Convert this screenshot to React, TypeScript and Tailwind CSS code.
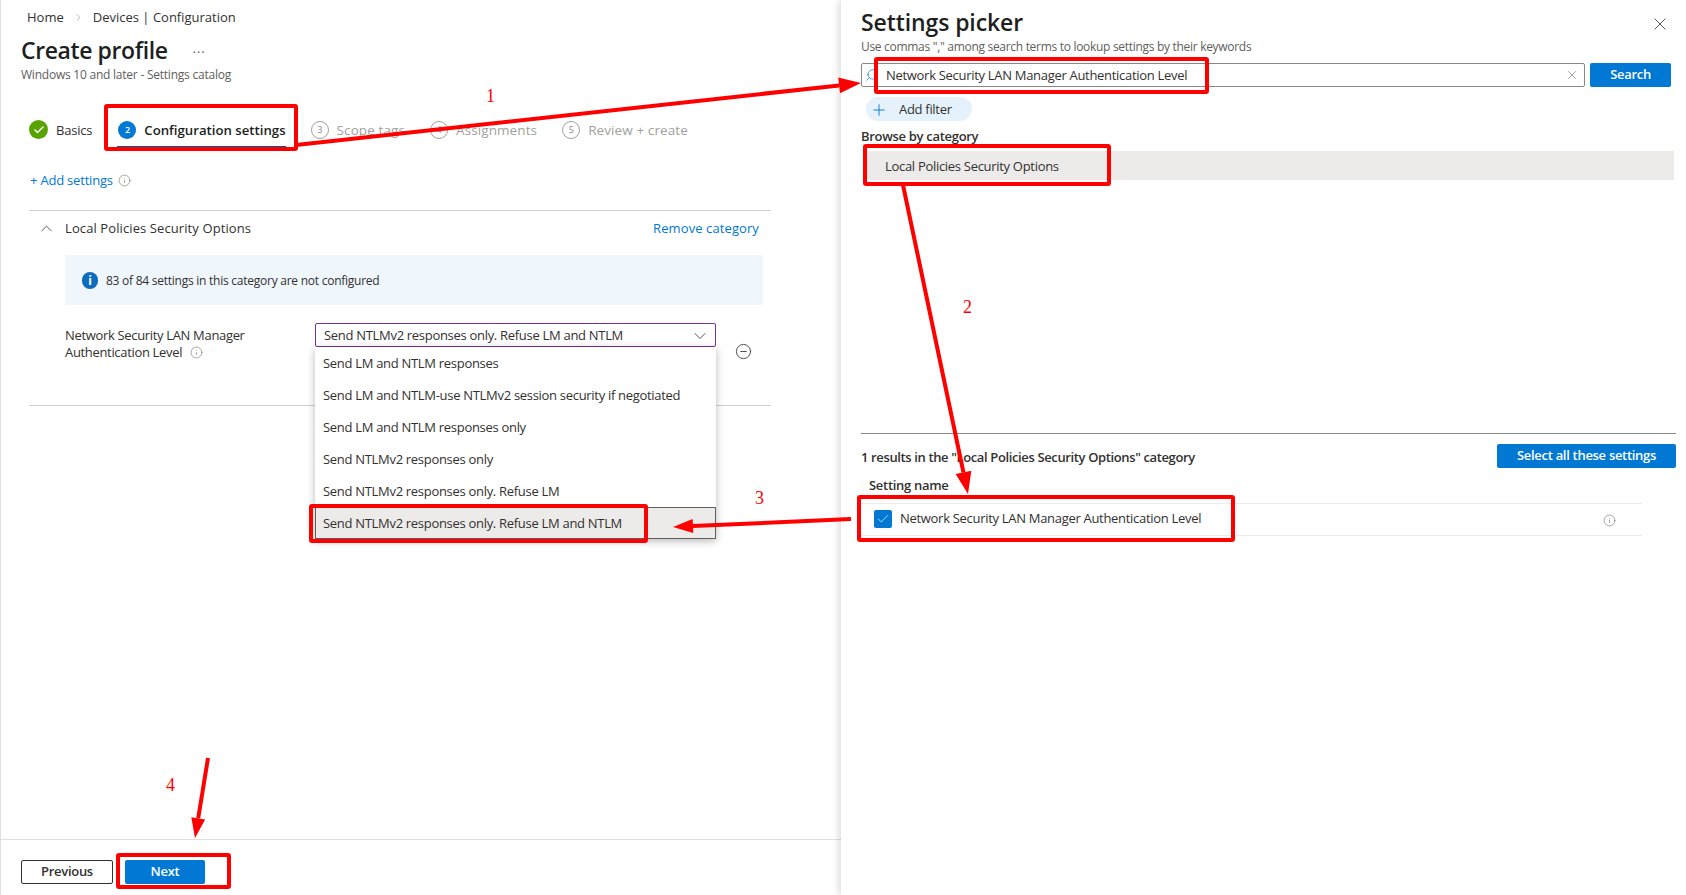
import { Check, ChevronDown, ChevronRight, ChevronUp, CircleMinus, Info, Plus, Search, X } from 'lucide-react';

const options = [
  'Send LM and NTLM responses',
  'Send LM and NTLM-use NTLMv2 session security if negotiated',
  'Send LM and NTLM responses only',
  'Send NTLMv2 responses only',
  'Send NTLMv2 responses only. Refuse LM',
  'Send NTLMv2 responses only. Refuse LM and NTLM',
];

const pendingSteps = [
  { n: 3, label: 'Scope tags' },
  { n: 4, label: 'Assignments' },
  { n: 5, label: 'Review + create' },
];

function Arrow({ x1, y1, x2, y2, head = 20, spread = 8 }: { x1: number; y1: number; x2: number; y2: number; head?: number; spread?: number }) {
  const len = Math.hypot(x2 - x1, y2 - y1);
  const ux = (x2 - x1) / len;
  const uy = (y2 - y1) / len;
  const bx = x2 - ux * head;
  const by = y2 - uy * head;
  const points = `${x2},${y2} ${bx - uy * spread},${by + ux * spread} ${bx + uy * spread},${by - ux * spread}`;
  return (
    <g>
      <line x1={x1} y1={y1} x2={bx} y2={by} stroke="#f00" strokeWidth={4} />
      <polygon points={points} fill="#f00" />
    </g>
  );
}

function Annotations() {
  const boxes = [
    [106, 106, 190, 43],
    [876, 59, 331, 33],
    [865, 146, 244, 38],
    [859, 497, 374, 43],
    [311, 506, 335, 35],
    [118, 855, 111, 32],
  ];
  const numbers = [
    { n: '1', cls: 'left-[486px] top-[84px]' },
    { n: '2', cls: 'left-[963px] top-[295px]' },
    { n: '3', cls: 'left-[755px] top-[486px]' },
    { n: '4', cls: 'left-[166px] top-[773px]' },
  ];
  return (
    <div className="absolute inset-0 z-20 pointer-events-none">
      <svg className="absolute inset-0" width="1686" height="895" fill="none">
        {boxes.map(([x, y, w, h]) => (
          <rect key={`${x}-${y}`} x={x} y={y} width={w} height={h} rx={1} stroke="#f00" strokeWidth={4} />
        ))}
        <Arrow x1={296} y1={145} x2={861} y2={83} head={22} spread={8} />
        <Arrow x1={903} y1={185} x2={968} y2={494} head={22} spread={8} />
        <Arrow x1={851} y1={519} x2={673} y2={527} head={20} spread={7} />
        <Arrow x1={208} y1={758} x2={195} y2={838} head={20} spread={7} />
      </svg>
      {numbers.map((item) => (
        <span key={item.n} className={`absolute text-[18px] leading-[24px] text-[#f00] font-['Liberation_Serif',serif] ${item.cls}`}>
          {item.n}
        </span>
      ))}
    </div>
  );
}

function StepCircle({ n }: { n: number }) {
  return (
    <span className="-mt-[3px] flex h-[18px] w-[18px] items-center justify-center rounded-full border border-[#a19f9d] text-[9px] text-[#8a8886]">
      {n}
    </span>
  );
}

function Tabs() {
  return (
    <div className="mt-[32px] flex h-[34px] items-center gap-[25px] pl-[28px] text-[13px]">
      <div className="flex items-center gap-[8px]">
        <span className="-mt-[3px] flex h-[19px] w-[19px] items-center justify-center rounded-full bg-[#57a300]">
          <Check size={12} strokeWidth={3} className="text-white" />
        </span>
        <span className="tracking-[-0.2px] text-[#323130]">Basics</span>
      </div>
      <div className="relative flex h-full items-center gap-[8px] pl-[1px]">
        <span className="-mt-[3px] flex h-[18px] w-[18px] items-center justify-center rounded-full bg-[#0078d4] text-[9px] font-semibold text-white">2</span>
        <span className="text-[13.2px] font-semibold tracking-normal text-[#201f1e]">Configuration settings</span>
        <span className="absolute bottom-0 left-0 right-0 h-[2px] bg-[#005a9e]" />
      </div>
      {pendingSteps.map((step) => (
        <div key={step.n} className="flex items-center gap-[8px]">
          <StepCircle n={step.n} />
          <span className="-mt-[1px] text-[13.5px] tracking-[0.1px] text-[#a19f9d]">{step.label}</span>
        </div>
      ))}
    </div>
  );
}

function SettingRow() {
  return (
    <div className="mt-[18px] flex pl-[64px]">
      <div className="mt-[4px] w-[250px] text-[13px] leading-[17px] tracking-[-0.33px] text-[#323130]">
        <div>Network Security LAN Manager</div>
        <div className="flex items-center gap-[8px]">
          Authentication Level
          <Info size={13} strokeWidth={1} className="text-[#605e5c]" />
        </div>
      </div>
      <div className="relative w-[401px]">
        <div className="flex h-[24px] items-center justify-between rounded-[2px] border border-[#7b2f9e] pl-[8px] pr-[5px] pt-[1px] text-[13px] text-[#323130]">
          <span>{options[5]}</span>
          <ChevronDown size={20} strokeWidth={1} className="text-[#323130]" />
        </div>
        <ul className="absolute left-0 right-0 top-[24px] z-10 bg-white text-[13px] text-[#323130] shadow-[0_2px_8px_rgba(0,0,0,0.28)]">
          {options.map((option, index) => (
            <li
              key={option}
              className={
                index === 5
                  ? 'flex h-[32px] items-center border border-[#605e5c] bg-[#edebe9] pl-[7px] pt-[1px]'
                  : 'flex h-[32px] items-center pl-[8px] pt-[2px]'
              }
            >
              {option}
            </li>
          ))}
        </ul>
      </div>
      <CircleMinus size={17} strokeWidth={1.2} className="ml-[19px] mt-[20px] text-[#323130]" />
    </div>
  );
}

function ProfilePane() {
  return (
    <div className="flex h-full w-[841px] shrink-0 flex-col border-l border-[#e1dfdd]">
      <div className="flex h-[35px] items-center pl-[26px] text-[13px] tracking-normal text-[#323130]">
        <span>Home</span>
        <ChevronRight size={11} strokeWidth={1} className="mx-[9px] text-[#605e5c]" />
        <span>Devices | Configuration</span>
      </div>
      <div className="flex h-[33px] items-center pl-[20px]">
        <h1 className="-mt-[2px] text-[23px] font-semibold tracking-[-0.4px] text-[#201f1e]">Create profile</h1>
        <span className="-mt-[6px] ml-[25px] text-[13px] tracking-[1px] text-[#605e5c]">...</span>
      </div>
      <p className="pl-[20px] text-[12px] leading-[14px] tracking-[-0.23px] text-[#605e5c]">Windows 10 and later - Settings catalog</p>
      <Tabs />
      <div className="mt-[22px] flex items-center gap-[5px] pl-[29px] text-[13px] leading-[20px] tracking-[-0.2px] text-[#0078d4]">
        <span>+ Add settings</span>
        <Info size={13} strokeWidth={1} className="text-[#605e5c]" />
      </div>
      <div className="ml-[28px] mt-[20px] w-[742px] border-t border-[#d2d0ce]">
        <div className="flex h-[35px] items-center text-[13px] tracking-[0.1px]">
          <ChevronUp size={19} strokeWidth={1} className="ml-[8px] text-[#323130]" />
          <span className="ml-[9px] text-[#323130]">Local Policies Security Options</span>
          <span className="ml-auto mr-[12px] text-[#0078d4]">Remove category</span>
        </div>
      </div>
      <div className="ml-[64px] mt-[9px] flex h-[50px] w-[698px] items-center gap-[8px] rounded-[2px] bg-[#eff6fc] pl-[17px] pt-[1px] text-[12px] tracking-[-0.25px] text-[#323130]">
        <span className="flex h-[17px] w-[16px] items-center justify-center rounded-full bg-[#0f6cbd] text-[12px] font-bold text-white">i</span>
        <span>83 of 84 settings in this category are not configured</span>
      </div>
      <SettingRow />
      <div className="ml-[28px] mt-[44px] w-[742px] border-t border-[#d2d0ce]" />
      <div className="mt-auto flex h-[56px] items-start gap-[12px] border-t border-[#e1dfdd] pl-[20px] pt-[20px]">
        <button className="h-[24px] w-[92px] rounded-[2px] border border-[#323130] text-[13px] font-semibold text-[#323130]">Previous</button>
        <button className="h-[24px] w-[80px] rounded-[2px] bg-[#0078d4] text-[13px] font-semibold text-white">Next</button>
      </div>
    </div>
  );
}

function PickerPane() {
  return (
    <div className="flex h-full flex-1 flex-col pl-[20px] pr-[10px] shadow-[-3px_0_6px_rgba(0,0,0,0.12)]">
      <div className="flex h-[47px] items-center justify-between">
        <h2 className="-mt-[3px] text-[23px] font-semibold leading-[30px] tracking-[-0.1px] text-[#201f1e]">Settings picker</h2>
        <X size={20} strokeWidth={1} className="mr-[6px] text-[#323130]" />
      </div>
      <p className="-mt-[8px] text-[12px] leading-[16px] text-[#605e5c]">Use commas "," among search terms to lookup settings by their keywords</p>
      <div className="mt-[8px] flex items-start gap-[5px] pr-[5px]">
        <div className="flex h-[24px] flex-1 items-center rounded-[2px] border border-[#8a8886] pl-[3px] pr-[5px]">
          <Search size={14} strokeWidth={1.2} className="-scale-x-100 text-[#0078d4]" />
          <span className="ml-[7px] pt-[1px] text-[13px] text-[#323130]">Network Security LAN Manager Authentication Level</span>
          <X size={14} strokeWidth={1} className="ml-auto text-[#605e5c]" />
        </div>
        <button className="h-[24px] w-[81px] rounded-[2px] bg-[#0078d4] text-[13px] font-semibold text-white">Search</button>
      </div>
      <div className="ml-[5px] mt-[10px] flex h-[24px] w-[106px] items-center rounded-full bg-[#e5f1fb] pl-[4px] pt-[1px] text-[13px] text-[#323130]">
        <Plus size={18} strokeWidth={1.2} className="text-[#0078d4]" />
        <span className="ml-[11px]">Add filter</span>
      </div>
      <div className="mt-[6px] text-[13px] font-semibold leading-[18px] text-[#323130]">Browse by category</div>
      <div className="ml-[5px] mr-[2px] mt-[6px] flex h-[29px] items-center bg-[#edebe9] pl-[19px] pt-[2px] text-[13px] text-[#323130]">Local Policies Security Options</div>
      <div className="mt-[253px] border-t border-[#8a8886]" />
      <div className="mt-[10px] flex items-start justify-between">
        <span className="mt-[4px] text-[13px] font-semibold leading-[18px] tracking-[-0.37px] text-[#323130]">1 results in the "Local Policies Security Options" category</span>
        <button className="h-[24px] w-[179px] rounded-[2px] bg-[#0078d4] text-[13px] font-semibold text-white">Select all these settings</button>
      </div>
      <div className="ml-[8px] mt-[8px] text-[13px] font-semibold leading-[18px] text-[#323130]">Setting name</div>
      <div className="mr-[34px] mt-[9px] flex h-[33px] items-center border-y border-[#edebe9] pl-[13px] pr-[10px]">
        <span className="-mt-[1px] flex h-[18px] w-[18px] items-center justify-center rounded-[2px] bg-[#0078d4]">
          <Check size={14} strokeWidth={1.2} className="text-white" />
        </span>
        <span className="-mt-[2px] ml-[8px] text-[13px] text-[#323130]">Network Security LAN Manager Authentication Level</span>
        <Info size={13} strokeWidth={1} className="ml-auto mr-[16px] mt-[2px] text-[#605e5c]" />
      </div>
    </div>
  );
}

export default function App() {
  return (
    <div className="relative flex h-[895px] w-[1686px] overflow-hidden bg-white font-['Open_Sans',sans-serif] tracking-[-0.3px]">
      <ProfilePane />
      <PickerPane />
      <Annotations />
    </div>
  );
}
